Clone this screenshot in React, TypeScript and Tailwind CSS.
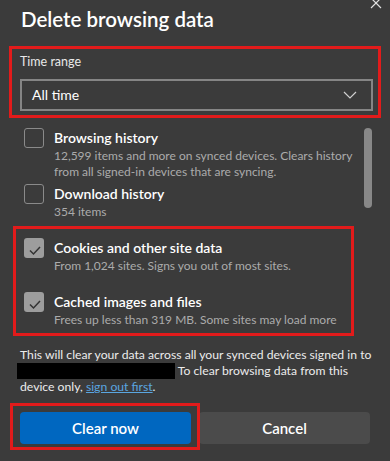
import React from 'react';

type Item = {
  title: string;
  desc: string[];
  checked: boolean;
  gap: string;
};

const items: Item[] = [
  {
    title: 'Browsing history',
    desc: ['12,599 items and more on synced devices. Clears history', 'from all signed-in devices that are syncing.'],
    checked: false,
    gap: 'mt-0',
  },
  { title: 'Download history', desc: ['354 items'], checked: false, gap: 'mt-[4px]' },
  {
    title: 'Cookies and other site data',
    desc: ['From 1,024 sites. Signs you out of most sites.'],
    checked: true,
    gap: 'mt-[18px]',
  },
  {
    title: 'Cached images and files',
    desc: ['Frees up less than 319 MB. Some sites may load more'],
    checked: true,
    gap: 'mt-[18px]',
  },
];

function Checkbox({ checked }: { checked: boolean }) {
  if (checked) {
    return (
      <div className="h-5 w-5 shrink-0 rounded-[3px] bg-[#9d9d9d]">
        <svg viewBox="0 0 20 20" className="h-5 w-5">
          <polyline points="6,12.5 9.5,16 16,9" fill="none" stroke="#333" strokeWidth="1.5" />
        </svg>
      </div>
    );
  }
  return <div className="h-5 w-5 shrink-0 rounded-[3px] border border-[#8a8a8a]" />;
}

export default function App() {
  return (
    <div className="relative h-[461px] w-[390px] overflow-hidden bg-[#3b3b3b] font-['Lato',sans-serif] text-white">
      {/* close button, cut off at the top */}
      <svg className="absolute right-[8px] top-[-3px] h-[12px] w-[12px]" viewBox="0 0 12 12">
        <path d="M1 1L11 11M11 1L1 11" stroke="#e0e0e0" strokeWidth="1.2" />
      </svg>

      {/* Title */}
      <h1 className="pl-[21px] pt-[5px] text-[20.5px] font-semibold leading-[28px]">Delete browsing data</h1>

      {/* Time range */}
      <div className="mx-[9px] mt-[13px] border-[3px] border-[#e21b1b] pb-[4px] pl-[8px] pr-[5px] pt-[5px]">
        <div className="text-[12.5px] leading-[16px] text-[#e8e8e8]">Time range</div>
        <div className="mt-[9px] flex h-[32px] items-center justify-between border-2 border-[#858585] pl-[10px] pr-[14px]">
          <span className="text-[14px] leading-[20px]">All time</span>
          <svg className="h-[8px] w-[14px]" viewBox="0 0 14 8">
            <polyline points="1,1 7,7 13,1" fill="none" stroke="#d0d0d0" strokeWidth="1.2" />
          </svg>
        </div>
      </div>

      {/* Options list */}
      <div className="relative">
        <div className="flex h-[210px] overflow-hidden pl-[24px] pt-[10px]">
          <div className="w-[332px]">
            {items.map((item) => (
              <div key={item.title} className={`flex gap-[10px] ${item.gap}`}>
                <Checkbox checked={item.checked} />
                <div>
                  <div className="text-[14px] font-semibold leading-[20px]">{item.title}</div>
                  {item.desc.map((line) => (
                    <div key={line} className="whitespace-nowrap text-[12px] leading-[16px] text-[#ababab]">
                      {line}
                    </div>
                  ))}
                </div>
              </div>
            ))}
          </div>
          <div className="ml-[8px] h-[80px] w-[8px] shrink-0 rounded-full bg-[#888888]" />
        </div>
        <div className="pointer-events-none absolute left-[13px] top-[108px] h-[110px] w-[341px] border-[3px] border-[#e21b1b]" />
      </div>

      {/* Sync notice */}
      <p className="mt-[19px] px-[20px] text-[12.2px] leading-[16px] text-[#ececec]">
        <span className="whitespace-nowrap">This will clear your data across all your synced devices signed in to</span>
        <br />
        <span className="-ml-[3px] inline-block h-[16px] w-[158px] bg-black align-top" />{' '}
        <span className="whitespace-nowrap">To clear browsing data from this</span>
        <br />
        device only,{' '}
        <a href="#" className="text-[#5aa6e0] underline">
          sign out first
        </a>
        .
      </p>

      {/* Buttons */}
      <div className="relative mt-[17px] flex gap-[8px] px-[20px]">
        <button className="h-[32px] w-[172px] rounded-[4px] bg-[#0067c0] text-[15px] font-semibold text-white">
          Clear now
        </button>
        <button className="h-[32px] w-[172px] rounded-[4px] bg-[#4b4b4b] text-[15px] font-semibold text-white">
          Cancel
        </button>
        <div className="pointer-events-none absolute left-[10px] top-[-9px] h-[47px] w-[190px] border-[3px] border-[#e21b1b]" />
      </div>
    </div>
  );
}
